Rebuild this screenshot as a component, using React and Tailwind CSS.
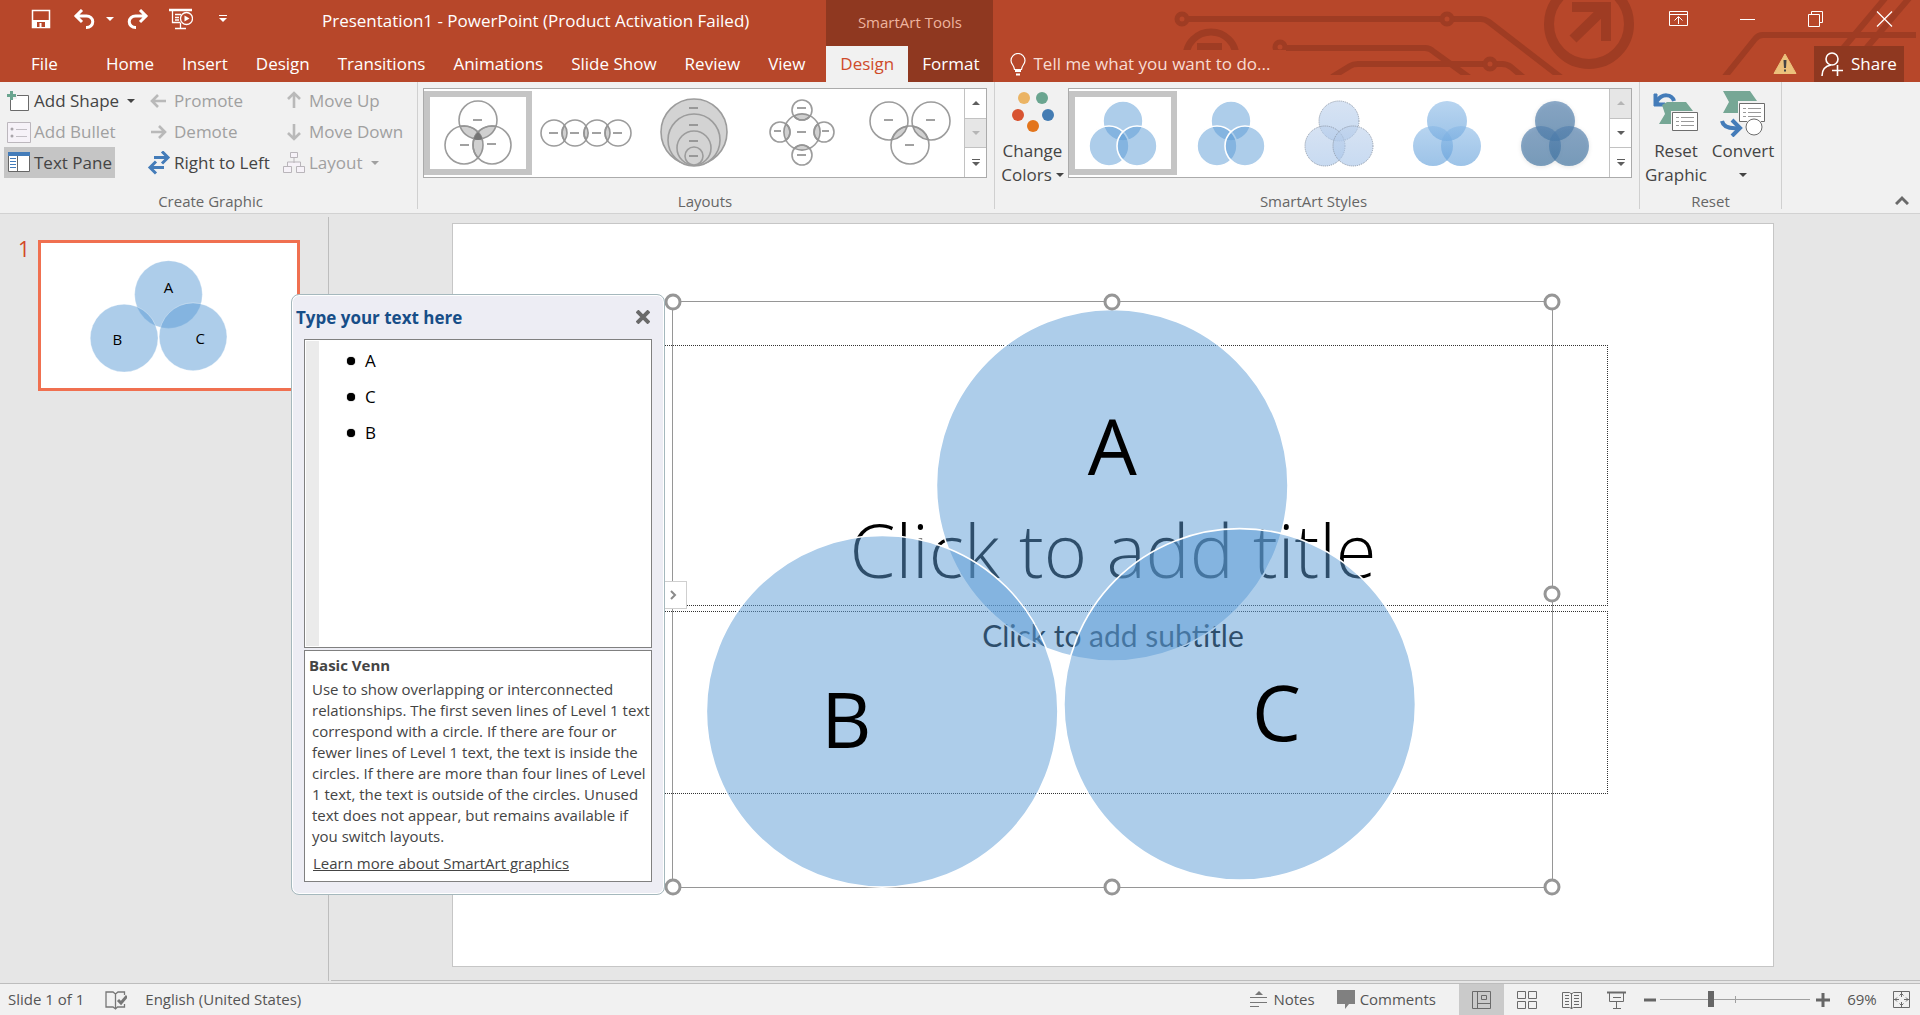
import React, { useState } from 'react';

const CIRCLES = [
    { label: 'A', cx: 440, cy: 184, tx: 440, ty: 174 },
    { label: 'B', cx: 209, cy: 411, tx: 173, ty: 448 },
    { label: 'C', cx: 568, cy: 404, tx: 605, ty: 441 },
];

const HANDLES = [
    'left-0 top-0', 'left-1/2 top-0', 'left-full top-0', 'left-full top-1/2',
    'left-0 top-full', 'left-1/2 top-full', 'left-full top-full',
];

const TABS = ['Home', 'Insert', 'Design', 'Transitions', 'Animations', 'Slide Show', 'Review', 'View'];

// lens shaped overlap of two circles, each given as [x, y, r]
const lens = ([x1, y1, r1], [x2, y2, r2]) => {
    const d = Math.hypot(x2 - x1, y2 - y1);
    const a = (r1 * r1 - r2 * r2 + d * d) / (2 * d);
    const h = Math.sqrt(r1 * r1 - a * a);
    const ux = (x2 - x1) / d;
    const uy = (y2 - y1) / d;
    const mx = x1 + a * ux;
    const my = y1 + a * uy;
    const p = [mx - h * uy, my + h * ux];
    const q = [mx + h * uy, my - h * ux];
    return `M${p} A${r1} ${r1} 0 0 0 ${q} A${r2} ${r2} 0 0 0 ${p}Z`;
};

const Caret = ({ className = '' }) => (
    <svg viewBox="0 0 8 4" className={`w-2 h-1 shrink-0 ${className}`} fill="currentColor"><path d="M0 0h8L4 4z" /></svg>
);

const SmartArt = () => (
    <svg viewBox="0 0 880 587" className="w-full h-full block overflow-visible">
        {CIRCLES.map((c) => (
            <circle key={c.label} cx={c.cx} cy={c.cy} r="176.500" fill="#5b9bd5" fillOpacity="0.5" stroke="#fff" strokeWidth="1.6" />
        ))}
        {CIRCLES.map((c) => (
            <text key={c.label} x={c.tx} y={c.ty} textAnchor="middle" className="text-[78px] font-['Open_Sans',sans-serif]">{c.label}</text>
        ))}
    </svg>
);

const LAYOUTS = [
    {
        name: 'Basic Venn',
        rings: [[0, -13, 19], [-14, 12, 19], [14, 12, 19]],
        overlaps: [[0, 1], [0, 2], [1, 2]],
        dashes: [[0, -13], [-13, 12], [14, 11]],
    },
    {
        name: 'Linear Venn',
        rings: [[-32, 0, 13], [-11, 0, 13], [11, 0, 13], [32, 0, 13]],
        overlaps: [[0, 1], [1, 2], [2, 3]],
        dashes: [[-32, 0], [-11, 0], [11, 0], [32, 0]],
    },
    {
        name: 'Stacked Venn',
        fill: '#d3d3d3',
        rings: [[0, -1, 33], [0, 7, 26], [0, 15, 17], [0, 23, 9]],
        overlaps: [],
        dashes: [[0, -25], [0, -8], [0, 8], [0, 23]],
    },
    {
        name: 'Radial Venn',
        rings: [[0, -1, 18], [0, -23, 10], [0, 22, 10], [-22, -1, 10], [22, -1, 10]],
        overlaps: [[0, 1], [0, 2], [0, 3], [0, 4]],
        dashes: [[0, -1], [0, -25], [0, 22], [-24, -2], [24, -2]],
    },
    {
        name: 'Interconnected Rings',
        rings: [[-21, -12, 19], [21, -12, 19], [0, 12, 19]],
        overlaps: [[0, 2], [1, 2]],
        dashes: [[-21, -13], [21, -13], [0, 12]],
    },
];

const LayoutIcon = ({ layout }) => (
    <svg viewBox="-48 -36 96 72" className="w-24 h-[72px]">
        {layout.rings.map(([x, y, r], i) => (
            <circle key={i} cx={x} cy={y} r={r} fill={layout.fill || '#fff'} stroke="#9c9c9c" strokeWidth="1.6" />
        ))}
        {layout.overlaps.map(([a, b], i) => (
            <path key={i} d={lens(layout.rings[a], layout.rings[b])} fill="#777" fillOpacity="0.35" stroke="#959595" strokeWidth="1.6" />
        ))}
        {layout.name === 'Basic Venn' && <path d="M0-1Q4 3 4 6Q0 8-4 6Q-4 3 0-1Z" fill="#757575" />}
        {layout.dashes.map(([x, y], i) => (
            <path key={i} d={`M${x - (Math.abs(x) > 22 && y < 0 ? 4 : 5)} ${y}h${Math.abs(x) > 22 && y < 0 ? 7 : 9}`} stroke="#8a8a8a" strokeWidth="1.6" />
        ))}
    </svg>
);

const STYLES = [
    { name: 'Simple Fill', fill: '#5b9bd5', opacity: 0.5, stroke: '#fff', r: 19 },
    { name: 'White Outline', fill: '#5b9bd5', opacity: 0.5, stroke: '#fff', r: 19 },
    { name: 'Subtle Effect', fill: 'url(#subtle)', opacity: 0.6, stroke: '#8b96a5', dash: '1 1', r: 20 },
    { name: 'Moderate Effect', fill: 'url(#moderate)', opacity: 0.6, stroke: 'none', r: 20 },
    { name: 'Intense Effect', fill: 'url(#intense)', opacity: 0.65, stroke: 'none', r: 20, shadow: true },
];

const StyleIcon = ({ item }) => (
    <svg viewBox="-48 -36 96 72" className={`w-24 h-[72px] ${item.shadow ? 'drop-shadow-sm' : ''}`}>
        <defs>
            <linearGradient id="subtle" x1="0" y1="0" x2="0" y2="1">
                <stop offset="0" stopColor="#bcd0eb" /><stop offset="1" stopColor="#a3c2e8" />
            </linearGradient>
            <linearGradient id="moderate" x1="0" y1="0" x2="0" y2="1">
                <stop offset="0" stopColor="#88b8e6" /><stop offset="1" stopColor="#5b9bd8" />
            </linearGradient>
            <linearGradient id="intense" x1="0" y1="0" x2="0" y2="1">
                <stop offset="0" stopColor="#527fae" /><stop offset="1" stopColor="#3a709f" />
            </linearGradient>
        </defs>
        {[[0, -12], [-14, 13], [14, 13]].map(([x, y]) => (
            <circle key={x} cx={x} cy={y} r={item.r + (item.stroke === '#fff' ? 1 : 0)} fill={item.fill} fillOpacity={item.opacity}
                stroke={item.stroke} strokeWidth={item.stroke === '#fff' ? 1.6 : 1} strokeDasharray={item.dash} />
        ))}
    </svg>
);

const Gallery = ({ items, Icon, label, disabled }) => {
    const [selected, setSelected] = useState(0);
    const arrow = 'flex-1 flex items-center justify-center border-b border-[#c2c2c2] last:border-b-0 text-[#5e5e5e] disabled:bg-[#e6e6e6] disabled:text-[#b5b5b5]';
    return (
        <div role="group" aria-label={label} className="flex h-[90px] bg-white border border-[#ababab]">
            <div className="flex items-center">
                {items.map((item, i) => (
                    <button key={item.name} aria-label={item.name} onClick={() => setSelected(i)}
                        className={`w-[108px] h-[84px] border-[6px] ${i === selected ? 'border-[#c5c5c5]' : 'border-transparent'}`}>
                        <Icon layout={item} item={item} />
                    </button>
                ))}
            </div>
            <div className="w-[22px] flex flex-col border-l border-[#c2c2c2]">
                <button aria-label="Previous row" disabled={disabled === 'up'} className={arrow}><Caret className="rotate-180" /></button>
                <button aria-label="Next row" disabled={disabled === 'down'} className={arrow}><Caret /></button>
                <button aria-label="More" className={arrow}>
                    <svg viewBox="0 0 8 8" className="w-2 h-2" fill="currentColor"><path d="M0 0h8v1H0zM0 3h8L4 7z" /></svg>
                </button>
            </div>
        </div>
    );
};

const Group = ({ label, className = '', children }) => (
    <section className={`mb-1 flex flex-col border-r border-[#d0d0d0] ${className}`}>
        <div className="flex">{children}</div>
        <h2 className="mt-auto text-center text-[15px] leading-4 text-[#666]">{label}</h2>
    </section>
);

const RibbonButton = ({ icon, children, disabled, active, caret }) => (
    <button disabled={disabled} aria-pressed={active}
        className={`h-[31px] w-fit px-[3px] flex items-center gap-[3px] text-[17px] leading-6 whitespace-nowrap text-[#444] disabled:text-[#a0a0a0] ${active ? 'bg-[#c5c5c5]' : ''}`}>
        <svg viewBox="0 0 24 24" className="w-6 h-6 shrink-0" fill="none">{icon}</svg>
        {children}
        {caret && <Caret className="ml-[5px]" />}
    </button>
);

const ICONS = {
    addShape: (
        <>
            <path d="M3.500 6.500h18v15h-18z" fill="#fff" stroke="#6a6a6a" />
            <path d="M0 0h10v10H0z" fill="#f1f1f1" />
            <path d="M3 2h3v3h3v3H6v3H3V8H0V5h3z" fill="#6aa590" />
        </>
    ),
    addBullet: (
        <>
            <path d="M.500 2.500h23v20H.500z" fill="#f6f2f8" stroke="#bcb7bd" />
            <circle cx="5" cy="9" r="1.500" fill="#a9a5aa" /><circle cx="5" cy="16" r="1.500" fill="#a9a5aa" />
            <path d="M9 9.500h11M9 16.500h11" stroke="#c3bfc5" />
        </>
    ),
    textPane: (
        <>
            <path d="M1.500 2.500h21v18h-21z" fill="#fff" stroke="#666" />
            <path d="M1 1h22v4H1z" fill="#447cb9" />
            <path d="M10.500 5v15" stroke="#666" />
            <path d="M3 7.500h6M3 10.500h6M3 13.500h6M3 16.500h6" stroke="#447cb9" />
        </>
    ),
    left: <path d="M19 12H5M11 6L5 12l6 6" stroke="#b9b9b9" strokeWidth="2.600" />,
    right: <path d="M4 12h14M12 6l6 6-6 6" stroke="#b9b9b9" strokeWidth="2.600" />,
    swap: <path d="M7 6.500h14M15 0.500l6 6-6 6M17 16.500H3M9 10.500l-6 6 6 6" stroke="#447cb9" strokeWidth="3" />,
    up: <path d="M12 19V4M6 10l6-6 6 6" stroke="#b9b9b9" strokeWidth="2.600" />,
    down: <path d="M12 4v15M6 13l6 6 6-6" stroke="#b9b9b9" strokeWidth="2.600" />,
    layout: <path d="M8.500 1.500h7v5h-7zM1.500 15.500h8v6h-8zM14.500 15.500h8v6h-8zM12 7v5M5.500 15v-4h13v4" fill="#f6f2f8" stroke="#b9b5ba" />,
};

const HeaderArt = () => (
    <svg viewBox="1170 0 750 82" className="absolute right-0 top-0 w-[750px] h-[82px] pointer-events-none" fill="none" stroke="#9f3c23" strokeWidth="6">
        <defs>
            <clipPath id="art-top"><path d="M1170 0h150v50h-150z" /></clipPath>
            <clipPath id="art-all"><path d="M1170 0h750v75h-750z" /></clipPath>
        </defs>
        <g clipPath="url(#art-all)">
            <circle cx="1182" cy="19" r="5" strokeWidth="5" />
            <path d="M1188 19h253M1453 19h28Q1485 19 1489 22L1563 79" />
            <circle cx="1447" cy="19" r="5" strokeWidth="5" />
            <g clipPath="url(#art-top)">
                <circle cx="1211" cy="57" r="25" strokeWidth="7" />
                <path d="M1197 46.500h25" strokeWidth="7" />
                <circle cx="1280" cy="47" r="5" strokeWidth="5" />
            </g>
            <path d="M1286 48h139Q1430 48 1434 52L1470 78" />
            <path d="M1332 77L1350 66Q1353 64 1358 64H1484M1496 64h6Q1507 64 1511 67L1524 78" />
            <circle cx="1490" cy="64" r="5" strokeWidth="5" />
            <circle cx="1589" cy="24" r="40" strokeWidth="10" />
            <path d="M1572 7h34v34M1573 39L1606 7" strokeWidth="10" />
            <path d="M1723 79L1755 39Q1758 35 1763 35H1916" />
            <path d="M1840 52L1887-4M1863 52L1911-4" />
        </g>
    </svg>
);

const iconButton = 'flex items-center justify-center shrink-0';

const Header = () => (
    <header className="relative flex h-[82px] bg-[#b7472a] text-white text-[17px] leading-6 whitespace-nowrap">
        <HeaderArt />
        <div className="relative flex flex-col">
            <div className="flex h-[46px] items-center pl-[31px] pr-[77px] pb-2">
                <button aria-label="Save" className={iconButton}>
                    <svg viewBox="0 0 20 20" className="w-5 h-5" fill="none" stroke="#fff">
                        <path d="M1.500 1.500h17v17h-17z" strokeWidth="1.500" /><path d="M2 11h16v7H2z" fill="#fff" stroke="none" />
                        <path d="M6 13h8v5H6z" fill="#b7472a" stroke="none" /><path d="M9.500 14v5" strokeWidth="2" />
                    </svg>
                </button>
                <button aria-label="Undo" className={`${iconButton} ml-[22px]`}>
                    <svg viewBox="0 0 22 20" className="w-[22px] h-5" fill="none" stroke="#fff" strokeWidth="3"><path d="M2 7h11.500a6 5.500 0 0 1 0 11.500H13M9 1L3 7l6 6" /></svg>
                </button>
                <button aria-label="Undo history" className={`${iconButton} ml-[11px]`}><Caret /></button>
                <button aria-label="Redo" className={`${iconButton} ml-[13px]`}>
                    <svg viewBox="0 0 22 20" className="w-[22px] h-5" fill="none" stroke="#fff" strokeWidth="3"><path d="M20 7H8.500a6 5.500 0 0 0 0 11.500H9M13 1l6 6-6 6" /></svg>
                </button>
                <button aria-label="Start from beginning" className={`${iconButton} ml-5`}>
                    <svg viewBox="0 0 24 22" className="w-6 h-[22px]" fill="none" stroke="#fff" strokeWidth="1.300">
                        <path d="M0 2h23" strokeWidth="2.500" /><path d="M3.500 3v11.500h8M6 6.500h6M6 9.500h4M6 12h4M11.500 15v5M6 20.500h11" />
                        <circle cx="17.500" cy="10.500" r="6" fill="#b7472a" /><path d="M15.500 7.500l5 3-5 3z" fill="#fff" stroke="none" />
                    </svg>
                </button>
                <button aria-label="Customize toolbar" className={`${iconButton} ml-[26px]`}>
                    <svg viewBox="0 0 8 8" className="w-2 h-2" fill="#fff"><path d="M0 0h8v1H0zM0 3h8L4 7z" /></svg>
                </button>
                <h1 className="ml-[95px] pt-1">Presentation1 - PowerPoint (Product Activation Failed)</h1>
            </div>
            <nav className="flex h-9 items-center">
                <button className="pl-[31px] pr-[34px]">File</button>
                {TABS.map((tab) => <button key={tab} className="h-9 px-[14px]">{tab}</button>)}
            </nav>
        </div>
        <div className="relative flex flex-col bg-[#8f3820]">
            <div className="h-[46px] flex items-center justify-center pb-[2px] text-[15px] text-[#eeb49f]">SmartArt Tools</div>
            <div className="flex h-9">
                <button className="px-[14px] bg-[#f1f1f1] text-[#cf4b2a]">Design</button>
                <button className="px-[14px]">Format</button>
            </div>
        </div>
        <div className="relative flex-1 flex flex-col">
            <div className="h-[46px] flex items-center justify-end gap-[50px] pr-[27px] pb-2">
                <button aria-label="Ribbon display options" className={iconButton}>
                    <svg viewBox="0 0 20 16" className="w-5 h-4" fill="none" stroke="#fff"><path d="M.500.500h18v14H.500zM.500 3.500h18M9.500 13V6M5.500 9.500l4-4 4 4" /></svg>
                </button>
                <button aria-label="Minimize" className={iconButton}>
                    <svg viewBox="0 0 18 16" className="w-[18px] h-4" stroke="#fff"><path d="M1 8.500h15" /></svg>
                </button>
                <button aria-label="Restore" className={iconButton}>
                    <svg viewBox="0 0 18 16" className="w-[18px] h-4" fill="none" stroke="#fff"><path d="M1.500 3.500h11v12h-11zM4.500 3V.500h11v11H13" /></svg>
                </button>
                <button aria-label="Close" className={iconButton}>
                    <svg viewBox="0 0 18 16" className="w-[18px] h-4" stroke="#fff" strokeWidth="1.200"><path d="M2 .500l15 15M17 .500l-15 15" /></svg>
                </button>
            </div>
            <div className="h-9 flex items-center pl-[17px] pr-4">
                <label htmlFor="tell-me" className="shrink-0">
                    <svg viewBox="0 0 16 23" className="w-4 h-[23px]" fill="none" stroke="#fff" strokeWidth="1.200">
                        <path d="M4.500 16.500c0-4-3.500-5-3.500-9a7 7 0 0 1 14 0c0 4-3.500 5-3.500 9z" /><path d="M5 18h6M6 21.500h4" strokeWidth="2" />
                    </svg>
                </label>
                <input id="tell-me" type="text" placeholder="Tell me what you want to do..." className="ml-[7px] w-72 bg-transparent outline-none placeholder:text-[#f7dcd3]" />
                <button aria-label="Activation warning" className={`${iconButton} ml-auto mr-[17px]`}>
                    <svg viewBox="0 0 24 22" className="w-6 h-[22px]">
                        <path d="M12 1L23 20.500H1z" fill="#ecc17c" stroke="#ecc17c" strokeLinejoin="round" /><path d="M10.500 7h3L13 15h-2zM11 16.500h2v2h-2z" fill="#444" />
                    </svg>
                </button>
                <button className="h-9 w-[90px] pl-[7px] flex items-center gap-2 bg-[#8f3820]">
                    <svg viewBox="0 0 22 24" className="w-[22px] h-6" fill="none" stroke="#fff" strokeWidth="1.600">
                        <circle cx="11" cy="7" r="6" /><path d="M1 24c0-6 3-10 9-11M16.500 13v11M11 18.500h11" />
                    </svg>
                    Share
                </button>
            </div>
        </div>
    </header>
);

const Ribbon = () => (
    <div className="flex h-[132px] bg-[#f1f1f1] border-b border-[#d2d2d2]">
        <Group label="Create Graphic" className="w-[418px] pt-[3px] pl-1">
            <div className="w-[140px]">
                <RibbonButton icon={ICONS.addShape} caret>Add Shape</RibbonButton>
                <RibbonButton icon={ICONS.addBullet} disabled>Add Bullet</RibbonButton>
                <RibbonButton icon={ICONS.textPane} active>Text Pane</RibbonButton>
            </div>
            <div className="w-[135px]">
                <RibbonButton icon={ICONS.left} disabled>Promote</RibbonButton>
                <RibbonButton icon={ICONS.right} disabled>Demote</RibbonButton>
                <RibbonButton icon={ICONS.swap}>Right to Left</RibbonButton>
            </div>
            <div>
                <RibbonButton icon={ICONS.up} disabled>Move Up</RibbonButton>
                <RibbonButton icon={ICONS.down} disabled>Move Down</RibbonButton>
                <RibbonButton icon={ICONS.layout} disabled caret>Layout</RibbonButton>
            </div>
        </Group>
        <Group label="Layouts" className="pt-[6px] pl-[5px] pr-[7px]">
            <Gallery items={LAYOUTS} Icon={LayoutIcon} label="Layouts" disabled="down" />
        </Group>
        <Group label="SmartArt Styles" className="pt-[6px] pr-[7px]">
            <button className="w-[73px] pl-[2px] flex flex-col items-center text-[17px] leading-6 text-[#444]">
                <svg viewBox="0 0 44 42" className="w-11 h-[42px] mt-[3px] mb-[6px]">
                    <circle cx="13" cy="7" r="6" fill="#ebb464" /><circle cx="31" cy="7" r="6" fill="#6aa590" />
                    <circle cx="7" cy="24" r="6" fill="#d85432" /><circle cx="37" cy="24" r="6" fill="#447cb3" />
                    <circle cx="22" cy="35" r="6" fill="#e3751c" />
                </svg>
                <span>Change</span>
                <span className="flex items-center gap-1">Colors <Caret /></span>
            </button>
            <Gallery items={STYLES} Icon={StyleIcon} label="SmartArt Styles" disabled="up" />
        </Group>
        <Group label="Reset" className="w-[142px] pt-[6px]">
            <button className="w-[72px] flex flex-col items-center text-[17px] leading-6 text-[#444]">
                <svg viewBox="0 0 46 46" className="w-[46px] h-[46px] mt-[3px] mb-[2px]" fill="none">
                    <path d="M21 10c-2-7-12-8-17 0" stroke="#447cb9" strokeWidth="4" /><path d="M1 3v12h11v-3H6L4 9V3z" fill="#447cb9" stroke="#447cb9" />
                    <path d="M9 14l5-3h19l7 9-8 13H6l6-10z" fill="#76a795" />
                    <path d="M18 20h27v20H18z" fill="#f1f1f1" /><path d="M19.500 21.500h25v18h-25z" fill="#fff" stroke="#6d6d6d" />
                    <path d="M23 26.500h3M28 26.500h13M23 30.500h3M28 30.500h13M23 34.500h3M28 34.500h13" stroke="#999" />
                </svg>
                <span>Reset</span>
                <span>Graphic</span>
            </button>
            <button className="w-[62px] flex flex-col items-center text-[17px] leading-6 text-[#444]">
                <svg viewBox="0 0 46 46" className="w-[46px] h-[46px] mt-[3px] mb-[2px]" fill="none">
                    <path d="M3 0h27l7 10-7 12H3l6-11z" fill="#76a795" />
                    <path d="M18 10h28v20H18z" fill="#f1f1f1" /><path d="M19.500 12.500h25v18h-25z" fill="#fff" stroke="#6d6d6d" />
                    <path d="M23 17.500h3M28 17.500h13M23 21.500h3M28 21.500h13M23 25.500h3M28 25.500h13" stroke="#999" />
                    <path d="M2 30c1 5 6 8 17 7" stroke="#447cb9" strokeWidth="4" /><path d="M12 29l8 8-8 8" stroke="#447cb9" strokeWidth="4" />
                    <circle cx="34" cy="36" r="9" fill="#f1f1f1" /><circle cx="34" cy="36" r="8" fill="#fff" stroke="#6d6d6d" />
                </svg>
                <span>Convert</span>
                <span className="h-6 flex items-center"><Caret /></span>
            </button>
        </Group>
        <button aria-label="Collapse the ribbon" className="ml-auto mt-auto mr-[11px] mb-2">
            <svg viewBox="0 0 14 10" className="w-[14px] h-[10px]" fill="none" stroke="#6a6a6a" strokeWidth="3"><path d="M1 9l6-6 6 6" /></svg>
        </button>
    </div>
);

const TextPane = () => (
    <aside className="absolute left-[291px] top-20 w-[374px] h-[601px] flex flex-col rounded-lg border border-[#a5b8bd] bg-[#ededf4] px-3 pb-3 ring-1 ring-inset ring-white">
        <div className="h-11 flex items-center justify-between -ml-2 pt-[2px]">
            <h2 className="text-[17px] leading-6 font-bold text-[#174e88]">Type your text here</h2>
            <button aria-label="Close text pane" className="mr-[2px] mb-[2px]">
                <svg viewBox="0 0 14 14" className="w-[14px] h-[14px]" stroke="#6a6a6a" strokeWidth="4"><path d="M1 1l12 12M13 1L1 13" /></svg>
            </button>
        </div>
        <ul className="flex-1 bg-white border border-[#808080] pl-[1px] py-[1px] flex">
            <li aria-hidden="true" className="w-[13px] bg-[#ebebeb]"></li>
            <li className="pl-7 pt-[2px]">
                <ul className="text-[17px] leading-9">
                    {['A', 'C', 'B'].map((t) => (
                        <li key={t} className="flex items-center gap-[10px]"><span className="w-2 h-2 rounded-full bg-black shadow-[0_0_1px_#000]"></span>{t}</li>
                    ))}
                </ul>
            </li>
        </ul>
        <div className="mt-[2px] h-[232px] bg-white border border-[#808080] px-1 pt-1 text-[15px] leading-[21px] text-[#444]">
            <h3 className="font-bold">Basic Venn</h3>
            <p className="mt-[3px] pl-[3px] whitespace-nowrap">
                Use to show overlapping or interconnected<br />
                relationships. The first seven lines of Level 1 text<br />
                correspond with a circle. If there are four or<br />
                fewer lines of Level 1 text, the text is inside the<br />
                circles. If there are more than four lines of Level<br />
                1 text, the text is outside of the circles. Unused<br />
                text does not appear, but remains available if<br />
                you switch layouts.
            </p>
            <a href="#learn" className="block w-fit mt-[6px] ml-1 underline">Learn more about SmartArt graphics</a>
        </div>
    </aside>
);

const Slide = () => (
    <div className="relative aspect-video bg-white border border-[#c6c6c6] text-black whitespace-nowrap">
        <div className="absolute left-[12.5%] top-[16.3%] w-[75%] h-[35.2%] border border-dotted border-[#333] flex items-end justify-center">
            <p className="text-[74px] leading-[110px] font-light">Click to add title</p>
        </div>
        <div className="absolute left-[12.5%] top-[52.2%] w-[75%] h-[24.6%] border border-dotted border-[#333] flex items-start justify-center">
            <p className="text-[30px] leading-[46px] font-[Lato,sans-serif]">Click to add subtitle</p>
        </div>
        <div className="absolute left-[16.6%] top-[10.4%] w-[66.7%] h-[79.1%] border border-[#969696]">
            <SmartArt />
            {HANDLES.map((pos) => (
                <span key={pos} className={`absolute w-[17px] h-[17px] -translate-x-1/2 -translate-y-1/2 rounded-full bg-white border-[3px] border-[#969696] ${pos}`}></span>
            ))}
        </div>
    </div>
);

const Workspace = () => (
    <main className="relative flex-1 flex pt-[3px] bg-[#e6e6e6]">
        <nav aria-label="Slides" className="w-[329px] mb-[2px] border-r border-[#bdbdbd] flex items-start pt-[23px] pl-[18px] gap-[10px]">
            <span className="w-[10px] text-[21px] leading-[18px] text-[#d24726]">1</span>
            <button aria-label="Slide 1" className="relative w-[262px] h-[151px] bg-white border-[3px] border-[#f07050]">
                <span className="absolute left-[16.7%] top-[11%] w-[66%] h-[78%]"><SmartArt /></span>
            </button>
        </nav>
        <div className="flex-1 ml-[2px] mb-[2px] pl-[121px] pr-[146px] pt-[6px] border-b border-[#bdbdbd]">
            <Slide />
        </div>
        <TextPane />
        <button aria-label="Hide text pane" className="absolute left-[665px] top-[367px] w-[22px] h-7 bg-white border border-l-0 border-[#cfcfcf] flex items-center pl-1">
            <svg viewBox="0 0 8 12" className="w-2 h-3" fill="none" stroke="#8a8a8a" strokeWidth="2"><path d="M2 2l4 4-4 4" /></svg>
        </button>
    </main>
);

const StatusBar = () => (
    <footer className="h-8 flex items-center bg-[#f1f1f1] border-t border-[#bdbdbd] text-[15px] leading-5 text-[#555] whitespace-nowrap pl-2 pr-[9px]">
        <span className="pb-[2px]">Slide 1 of 1</span>
        <button aria-label="Spelling" className={`${iconButton} ml-[21px]`}>
            <svg viewBox="0 0 22 20" className="w-[22px] h-5" fill="none" stroke="#777" strokeWidth="1.300">
                <path d="M10.500 19V4L8 2H1v15h7l2.500 2 2-2h7v-3M10.500 4L13 2h6.500v3" /><path d="M13 10l3 3 6-7" strokeWidth="3" />
            </svg>
        </button>
        <button className="ml-[18px] pb-[2px]">English (United States)</button>
        <button className="ml-auto pb-[2px] flex items-center gap-[5px]">
            <svg viewBox="0 0 18 18" className="w-[18px] h-[18px]" stroke="#777"><path d="M5 5l4-4 4 4z" fill="#777" stroke="none" /><path d="M0 7.500h17M0 12.500h17M0 16.500h9" /></svg>
            Notes
        </button>
        <button className="ml-[21px] pb-[2px] flex items-center gap-1">
            <svg viewBox="0 0 20 20" className="w-5 h-5" fill="#808080"><path d="M1 1h18v14h-6l-4 5v-5H1z" /></svg>
            Comments
        </button>
        <button aria-label="Normal" aria-pressed="true" className="ml-[23px] w-[45px] h-[31px] flex items-center justify-center bg-[#cacaca]">
            <svg viewBox="0 0 20 18" className="w-5 h-[18px]" fill="none" stroke="#6a6a6a"><path d="M.500.500h18v17H.500zM5.500.500v17M5.500 12.500h13M9.500 4.500h5v4h-5z" /></svg>
        </button>
        <button aria-label="Slide sorter" className={`${iconButton} w-[45px]`}>
            <svg viewBox="0 0 20 18" className="w-5 h-[18px]" fill="none" stroke="#6a6a6a"><path d="M.500.500h8v7h-8zM11.500.500h8v7h-8zM.500 10.500h8v7h-8zM11.500 10.500h8v7h-8z" /></svg>
        </button>
        <button aria-label="Reading view" className={`${iconButton} w-[45px]`}>
            <svg viewBox="0 0 20 18" className="w-5 h-[18px]" fill="none" stroke="#6a6a6a">
                <path d="M.500 1.500h7l2 1.500 2-1.500h8v15h-8l-2 1-2-1h-7zM9.500 2v16M3 4.500h4M3 7.500h4M3 10.500h4M3 13.500h4M12 4.500h5M12 7.500h5M12 10.500h5M12 13.500h5" />
            </svg>
        </button>
        <button aria-label="Slide show" className={`${iconButton} w-[45px]`}>
            <svg viewBox="0 0 20 18" className="w-5 h-[18px]" fill="none" stroke="#6a6a6a"><path d="M0 1.500h19" strokeWidth="2" /><path d="M2.500 2v8.500h14V2M6 6.500h8M9.500 11v6M6 17.500h8" /></svg>
        </button>
        <button aria-label="Zoom out" className="ml-[5px]">
            <svg viewBox="0 0 12 12" className="w-3 h-3" stroke="#666" strokeWidth="3"><path d="M0 6h12" /></svg>
        </button>
        <div className="relative ml-1 w-[150px] h-5 flex items-center">
            <span className="absolute left-1/2 w-px h-[7px] bg-[#a0a0a0]"></span>
            <input type="range" aria-label="Zoom" defaultValue="33"
                className="relative w-full h-5 appearance-none bg-transparent [&::-webkit-slider-runnable-track]:h-px [&::-webkit-slider-runnable-track]:bg-[#a0a0a0] [&::-webkit-slider-thumb]:appearance-none [&::-webkit-slider-thumb]:w-[6px] [&::-webkit-slider-thumb]:h-4 [&::-webkit-slider-thumb]:-mt-2 [&::-webkit-slider-thumb]:bg-[#666]" />
        </div>
        <button aria-label="Zoom in" className="ml-[6px]">
            <svg viewBox="0 0 14 14" className="w-[14px] h-[14px]" stroke="#666" strokeWidth="3"><path d="M0 7h14M7 0v14" /></svg>
        </button>
        <button className="ml-4 w-8 pb-[2px]">69%</button>
        <button aria-label="Fit slide to window" className="ml-[15px]">
            <svg viewBox="0 0 18 18" className="w-[18px] h-[18px]" fill="none" stroke="#6a6a6a"><path d="M.500.500h16v16H.500zM8.500 1v5M8.500 11v5M1 8.500h5M11 8.500h5M6.500 4.500l2-2 2 2M6.500 12.500l2 2 2-2M4 6.500l-2 2 2 2M13 6.500l2 2-2 2" /></svg>
        </button>
    </footer>
);

const App = () => (
    <div className="min-h-screen flex flex-col overflow-x-hidden font-['Open_Sans','Noto_Sans',sans-serif]">
        <Header />
        <Ribbon />
        <Workspace />
        <StatusBar />
    </div>
);

export default App;
